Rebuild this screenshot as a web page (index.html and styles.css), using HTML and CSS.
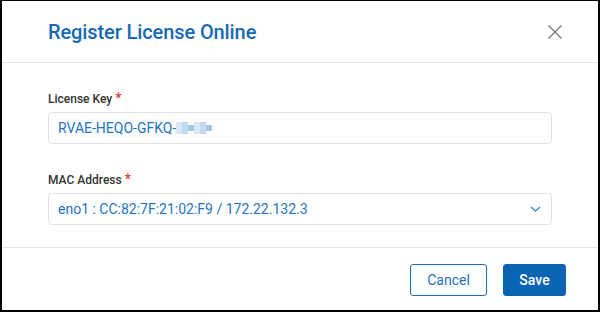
FILE: index.html
```html
<!DOCTYPE html>
<html lang="en">

<head>
    <meta charset="UTF-8">
    <meta name="viewport" content="width=device-width, initial-scale=1.0">
    <title>Register License Online</title>
    <link rel="stylesheet" href="styles.css">
</head>

<body>
    <div class="dialog">
        <div class="dialog-header">
            <h1 class="dialog-title">Register License Online</h1>
            <button class="close-btn" type="button" aria-label="Close">
                <svg width="14" height="14" viewBox="0 0 14 14">
                    <path d="M0.5 0.5 L13.5 13.5 M13.5 0.5 L0.5 13.5" stroke="#7a7a7a" stroke-width="1.3" fill="none"/>
                </svg>
            </button>
        </div>

        <div class="dialog-body">
            <label class="field-label">License Key <span class="req">*</span></label>
            <div class="field-box">
                <span class="field-value">RVAE-HEQO-GFKQ-</span><span class="blurred"><i></i><i class="mid"></i><i class="dark"></i><i></i><i class="mid"></i><i class="dark"></i></span>
            </div>

            <label class="field-label second">MAC Address <span class="req">*</span></label>
            <div class="field-box select">
                <span class="field-value">eno1 : CC:82:7F:21:02:F9 / 172.22.132.3</span>
                <svg class="chevron" width="11" height="6" viewBox="0 0 11 6">
                    <path d="M1 1 L5.5 5 L10 1" stroke="#4a90d0" stroke-width="1.5" fill="none"/>
                </svg>
            </div>
        </div>

        <div class="dialog-footer">
            <button class="btn btn-cancel" type="button">Cancel</button>
            <button class="btn btn-save" type="button">Save</button>
        </div>
    </div>
</body>
</html>
```

FILE: styles.css
```css
* {
    padding: 0;
    margin: 0;
    box-sizing: border-box;
}
body {
    font-family: Roboto, "Liberation Sans", sans-serif;
    background: #fff;
}
.dialog {
    width: 600px;
    height: 312px;
    border-style: solid;
    border-color: #000;
    border-width: 1px 2px 2px 2px;
    background: #fff;
    display: flex;
    flex-direction: column;
}
.dialog-header {
    height: 62px;
    display: flex;
    align-items: center;
    justify-content: space-between;
    padding: 0 36px 0 46px;
    border-bottom: 1px solid #e4e4e4;
}
.dialog-title {
    font-size: 20px;
    font-weight: 500;
    color: #1769b3;
    letter-spacing: -0.1px;
}
.close-btn {
    background: none;
    border: none;
    width: 14px;
    height: 14px;
    display: flex;
}
.dialog-body {
    flex: 1;
    padding: 27px 46px 0 46px;
    display: flex;
    flex-direction: column;
}
.field-label {
    font-size: 12px;
    line-height: 16px;
    font-weight: 500;
    color: #333;
    margin-bottom: 5px;
}
.field-label.second {
    margin-top: 27px;
}
.req {
    color: #d93a2e;
    font-size: 14px;
}
.field-box {
    height: 32px;
    border: 1px solid #e2e2e2;
    border-radius: 4px;
    display: flex;
    align-items: center;
    padding: 0 9px;
}
.field-value {
    font-size: 14px;
    color: #1f74c1;
}
.blurred {
    display: flex;
    align-items: center;
    height: 12px;
}
.blurred i {
    width: 6px;
    height: 12px;
    background: #dbe8f5;
}
.blurred i.mid {
    background: #c3d9ef;
}
.blurred i.dark {
    background: #a6c7e7;
    height: 6px;
}
.select {
    justify-content: space-between;
}
.chevron {
    margin-right: 1px;
}
.dialog-footer {
    height: 63px;
    border-top: 1px solid #e4e4e4;
    display: flex;
    justify-content: flex-end;
    align-items: flex-start;
    gap: 16px;
    padding: 16px 32px 0 0;
}
.btn {
    height: 32px;
    border-radius: 3px;
    font-family: Roboto, "Liberation Sans", sans-serif;
    font-size: 14px;
    font-weight: 500;
}
.btn-cancel {
    width: 77px;
    background: #fff;
    color: #1f6fb9;
    border: 1px solid #1f6fb9;
    font-weight: 400;
}
.btn-save {
    width: 63px;
    background: #0b64b3;
    color: #fff;
    border: 1px solid #0b64b3;
}
```
